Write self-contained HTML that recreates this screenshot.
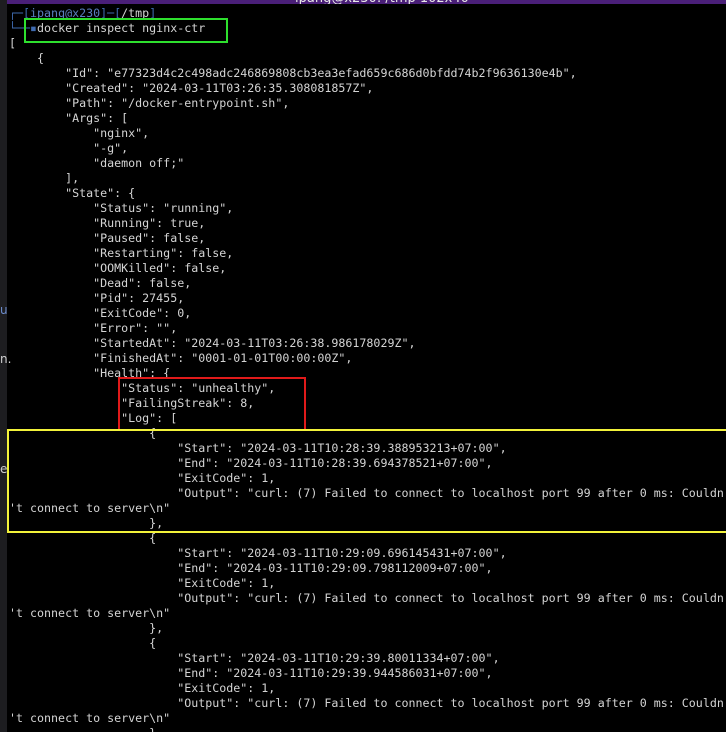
<!DOCTYPE html>
<html><head><meta charset="utf-8"><style>
html,body{margin:0;padding:0;background:#000;width:726px;height:732px;overflow:hidden;position:relative}
.strip{position:absolute;left:0;top:0;width:7px;height:732px;background:#1d1d20}
.bar{position:absolute;left:7px;top:0;width:719px;height:4px;background:#4a1f78;overflow:hidden}
.title{position:absolute;left:288px;top:-9px;color:#e8e8e8;font:13px "DejaVu Sans","Liberation Sans",sans-serif;white-space:pre}
pre{position:absolute;left:9px;top:6px;margin:0;font-family:"DejaVu Sans Mono","Liberation Mono",monospace;font-size:11.65px;line-height:15px;color:#d4d4d4;white-space:pre}
.b{color:#3f6bb0}.p{color:#5a7fc0}
.box{position:absolute;box-sizing:border-box}
.sl{position:absolute;left:0;color:#cfcfcf;font:12px "DejaVu Sans",sans-serif}
</style></head><body>
<div class="strip"></div>
<div class="bar"><div class="title">ipang@x230: /tmp 102x40</div></div>
<div class="sl" style="top:303px;color:#6c8ccc">u</div>
<div class="sl" style="top:352px">n.</div>
<div class="sl" style="top:462px">e</div>
<pre><span class="b">┌─[</span><span class="p">ipang@x230</span><span class="b">]─[</span>/tmp<span class="b">]</span>
<span class="b">└──</span><span class="b">▪</span>docker inspect nginx-ctr
[
    {
        "Id": "e77323d4c2c498adc246869808cb3ea3efad659c686d0bfdd74b2f9636130e4b",
        "Created": "2024-03-11T03:26:35.308081857Z",
        "Path": "/docker-entrypoint.sh",
        "Args": [
            "nginx",
            "-g",
            "daemon off;"
        ],
        "State": {
            "Status": "running",
            "Running": true,
            "Paused": false,
            "Restarting": false,
            "OOMKilled": false,
            "Dead": false,
            "Pid": 27455,
            "ExitCode": 0,
            "Error": "",
            "StartedAt": "2024-03-11T03:26:38.986178029Z",
            "FinishedAt": "0001-01-01T00:00:00Z",
            "Health": {
                "Status": "unhealthy",
                "FailingStreak": 8,
                "Log": [
                    {
                        "Start": "2024-03-11T10:28:39.388953213+07:00",
                        "End": "2024-03-11T10:28:39.694378521+07:00",
                        "ExitCode": 1,
                        "Output": "curl: (7) Failed to connect to localhost port 99 after 0 ms: Couldn
't connect to server\n"
                    },
                    {
                        "Start": "2024-03-11T10:29:09.696145431+07:00",
                        "End": "2024-03-11T10:29:09.798112009+07:00",
                        "ExitCode": 1,
                        "Output": "curl: (7) Failed to connect to localhost port 99 after 0 ms: Couldn
't connect to server\n"
                    },
                    {
                        "Start": "2024-03-11T10:29:39.80011334+07:00",
                        "End": "2024-03-11T10:29:39.944586031+07:00",
                        "ExitCode": 1,
                        "Output": "curl: (7) Failed to connect to localhost port 99 after 0 ms: Couldn
't connect to server\n"
                    },</pre>
<div class="box" style="left:24px;top:18px;width:204px;height:25px;border:2px solid #2ee02e"></div>
<div class="box" style="left:118px;top:377px;width:188px;height:54px;border:2px solid #e01a1a;border-bottom:none"></div>
<div class="box" style="left:7px;top:429px;width:721px;height:104px;border:2px solid #f2f23a;border-right:none"></div>
</body></html>
